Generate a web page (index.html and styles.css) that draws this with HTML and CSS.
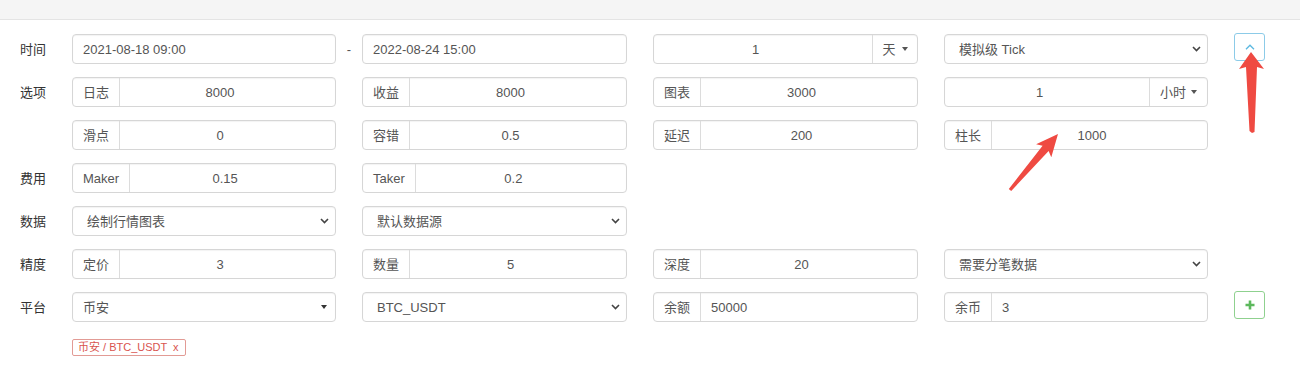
FILE: index.html
```html
<!DOCTYPE html>
<html lang="zh-CN">
  <head>
    <meta charset="utf-8">
    <title>回测设置</title>
    <link rel="stylesheet" href="styles.css">
  </head>
  <body>
    <div id="top-bar"></div>

    <div id="backtest-form">
      <div class="form-row">
        <div class="row-label">时间</div>
        <div class="box text dash">2021-08-18 09:00</div>
        <div class="box text">2022-08-24 15:00</div>
        <div class="group">
          <span class="value">1</span>
          <span class="addon drop day">天<i class="caret"></i></span>
        </div>
        <div class="box select">模拟级 Tick
          <svg class="chev" width="9" height="6" viewBox="0 0 9 6"><path d="M1 1l3.5 3.5L8 1" fill="none" stroke="#444" stroke-width="1.6"/></svg>
        </div>
        <button class="icon-btn info">
          <svg width="10" height="6" viewBox="0 0 10 6"><path d="M1 5.2L5 1.2 9 5.2" fill="none" stroke="#5bb8e0" stroke-width="1.3"/></svg>
        </button>
      </div>

      <div class="form-row">
        <div class="row-label">选项</div>
        <div class="group"><span class="addon">日志</span><span class="value">8000</span></div>
        <div class="group"><span class="addon">收益</span><span class="value">8000</span></div>
        <div class="group"><span class="addon">图表</span><span class="value">3000</span></div>
        <div class="group">
          <span class="value">1</span>
          <span class="addon drop hour">小时<i class="caret"></i></span>
        </div>
      </div>

      <div class="form-row">
        <div class="row-label"></div>
        <div class="group"><span class="addon">滑点</span><span class="value">0</span></div>
        <div class="group"><span class="addon">容错</span><span class="value">0.5</span></div>
        <div class="group"><span class="addon">延迟</span><span class="value">200</span></div>
        <div class="group"><span class="addon">柱长</span><span class="value">1000</span></div>
      </div>

      <div class="form-row">
        <div class="row-label">费用</div>
        <div class="group"><span class="addon">Maker</span><span class="value">0.15</span></div>
        <div class="group"><span class="addon">Taker</span><span class="value">0.2</span></div>
      </div>

      <div class="form-row">
        <div class="row-label">数据</div>
        <div class="box select">绘制行情图表
          <svg class="chev" width="9" height="6" viewBox="0 0 9 6"><path d="M1 1l3.5 3.5L8 1" fill="none" stroke="#444" stroke-width="1.6"/></svg>
        </div>
        <div class="box select">默认数据源
          <svg class="chev" width="9" height="6" viewBox="0 0 9 6"><path d="M1 1l3.5 3.5L8 1" fill="none" stroke="#444" stroke-width="1.6"/></svg>
        </div>
      </div>

      <div class="form-row">
        <div class="row-label">精度</div>
        <div class="group"><span class="addon">定价</span><span class="value">3</span></div>
        <div class="group"><span class="addon">数量</span><span class="value">5</span></div>
        <div class="group"><span class="addon">深度</span><span class="value">20</span></div>
        <div class="box select">需要分笔数据
          <svg class="chev" width="9" height="6" viewBox="0 0 9 6"><path d="M1 1l3.5 3.5L8 1" fill="none" stroke="#444" stroke-width="1.6"/></svg>
        </div>
      </div>

      <div class="form-row">
        <div class="row-label">平台</div>
        <div class="box text picker">币安<i class="caret dark"></i></div>
        <div class="box select">BTC_USDT
          <svg class="chev" width="9" height="6" viewBox="0 0 9 6"><path d="M1 1l3.5 3.5L8 1" fill="none" stroke="#444" stroke-width="1.6"/></svg>
        </div>
        <div class="group"><span class="addon">余额</span><span class="value left">50000</span></div>
        <div class="group"><span class="addon">余币</span><span class="value left">3</span></div>
        <button class="icon-btn success">
          <svg width="10" height="10" viewBox="0 0 10 10"><path d="M5 0.5v9M0.5 5h9" stroke="#5cb85c" stroke-width="2.6"/></svg>
        </button>
      </div>

      <div class="tag-row">
        <div class="row-label"></div>
        <div><span class="tag">币安 / BTC_USDT <span class="tag-x">x</span></span></div>
      </div>
    </div>

    <svg id="marks" width="1300" height="365" viewBox="0 0 1300 365">
      <polygon fill="#ef4a42" points="1251,52 1264,69 1257,67 1254.5,132 1252,133 1249.5,131 1246,67 1239,69"/>
      <polygon fill="#ef4a42" points="1058,134 1051.3,157.2 1048.6,151 1011.2,191 1008.8,189 1042.6,145.8 1036.1,144.2"/>
    </svg>
  </body>
</html>
```

FILE: styles.css
```css
body {
  margin: 0;
  padding: 0;
  background-color: #fff;
  color: #555;
  font-family: "Liberation Sans", Arial, "Noto Sans CJK SC", sans-serif;
  font-size: 13px;
}
#top-bar {
  height: 19px;
  background-color: #f5f5f5;
  border-bottom: 1px solid #e4e4e4;
}
#backtest-form {
  padding: 14px 0 0 20px;
  display: flex;
  flex-direction: column;
  gap: 13px;
}
.form-row,
.tag-row {
  display: grid;
  grid-template-columns: 26px 264px 265px 265px 264px 31px;
  column-gap: 26px;
  align-items: center;
  height: 30px;
}
.tag-row {
  height: 18px;
  margin-top: 3px;
}
.row-label {
  color: #333;
  white-space: nowrap;
  margin-top: -2px;
}
.box,
.group {
  height: 30px;
  box-sizing: border-box;
  border: 1px solid #d6d6d6;
  border-radius: 4px;
  box-shadow: inset 0 1px 1px rgba(0,0,0,0.05);
  background-color: #fff;
  line-height: 1;
}
.box {
  display: flex;
  align-items: center;
  padding: 0 10px;
  position: relative;
}
.select {
  padding-left: 14px;
  justify-content: space-between;
  color: #555;
}
.chev {
  margin-right: -4px;
}
.picker {
  justify-content: space-between;
  padding-right: 8px;
}
.dash::after {
  content: "-";
  position: absolute;
  right: -16px;
  color: #555;
}
.group {
  display: flex;
  align-items: stretch;
}
.addon {
  display: flex;
  align-items: center;
  padding: 0 10px;
  border-right: 1px solid #dcdcdc;
  color: #555;
  white-space: nowrap;
}
.addon.drop {
  border-right: none;
  border-left: 1px solid #dcdcdc;
  padding: 0;
  justify-content: center;
  gap: 6px;
}
.addon.day {
  width: 44px;
}
.addon.hour {
  width: 57px;
  gap: 5px;
}
.value {
  flex: 1;
  display: flex;
  align-items: center;
  justify-content: center;
  padding-right: 15px;
}
.value.left {
  justify-content: flex-start;
  padding: 0 0 0 10px;
}
.caret {
  display: inline-block;
  width: 0;
  height: 0;
  border-top: 4px solid #555;
  border-left: 3.5px solid transparent;
  border-right: 3.5px solid transparent;
}
.caret.dark {
  border-top-color: #333;
}
.icon-btn {
  width: 31px;
  height: 28px;
  padding: 0;
  background-color: #fff;
  border-radius: 3px;
  display: flex;
  align-items: center;
  justify-content: center;
  cursor: pointer;
}
.icon-btn.info {
  border: 1px solid #8ccbe8;
  align-self: start;
  margin-top: -1px;
}
.icon-btn.success {
  border: 1px solid #8fd18f;
  align-self: start;
  margin-top: -1px;
}
.tag {
  display: inline-block;
  border: 1px solid #e29b95;
  border-radius: 2px;
  color: #d9534f;
  font-size: 11px;
  line-height: 15px;
  padding: 0 6px 0 5px;
}
.tag-x {
  margin-left: 3px;
}
#marks {
  position: absolute;
  left: 0;
  top: 0;
  pointer-events: none;
}
```
